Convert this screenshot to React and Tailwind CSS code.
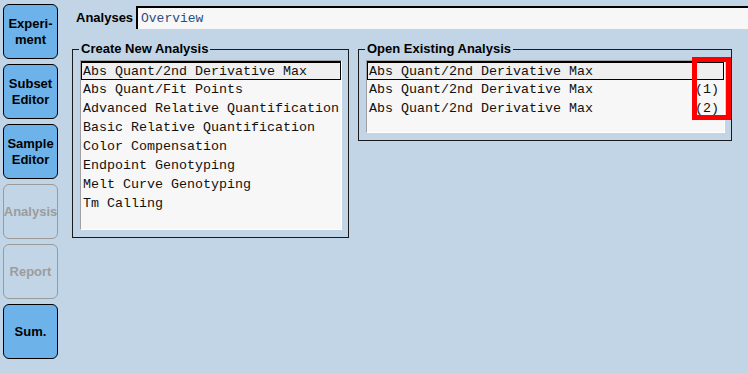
import React from "react";

const createItems = [
  "Abs Quant/2nd Derivative Max",
  "Abs Quant/Fit Points",
  "Advanced Relative Quantification",
  "Basic Relative Quantification",
  "Color Compensation",
  "Endpoint Genotyping",
  "Melt Curve Genotyping",
  "Tm Calling",
];

const openItems = [
  { name: "Abs Quant/2nd Derivative Max", tag: "" },
  { name: "Abs Quant/2nd Derivative Max", tag: "(1)" },
  { name: "Abs Quant/2nd Derivative Max", tag: "(2)" },
];

const navButtons = [
  { label: ["Experi-", "ment"], enabled: true },
  { label: ["Subset", "Editor"], enabled: true },
  { label: ["Sample", "Editor"], enabled: true },
  { label: ["Analysis"], enabled: false },
  { label: ["Report"], enabled: false },
  { label: ["Sum."], enabled: true },
];

function NavButton({ label, enabled }) {
  return (
    <button
      className={
        enabled
          ? "flex h-[55px] w-[55px] flex-col items-center justify-center rounded-[6px] border border-black bg-[#6db2e9] text-[13px] font-bold leading-[16px] text-black"
          : "flex h-[55px] w-[55px] flex-col items-center justify-center rounded-[6px] border border-[#9a9a9a] bg-[#c1d5e6] text-[13px] font-bold leading-[16px] text-[#9c9c9c]"
      }
    >
      {label.map((l) => (
        <span key={l}>{l}</span>
      ))}
    </button>
  );
}

function Row({ selected, children }) {
  return (
    <div
      className={
        selected
          ? "flex h-[19px] items-center justify-between whitespace-nowrap border border-t-2 border-black bg-[#efefef] pl-[1px] pr-[4px]"
          : "flex h-[19px] items-center justify-between whitespace-nowrap border border-transparent pl-[1px] pr-[4px]"
      }
    >
      {children}
    </div>
  );
}

function GroupBox({ title, className, children }) {
  return (
    <fieldset className={`relative min-w-0 border border-[#1a1a1a] pb-[7px] pl-[7px] pr-[6px] pt-[3px] ${className}`}>
      <legend className="ml-[-1px] px-[2px] text-[13px] font-bold leading-[16px] text-black">
        {title}
      </legend>
      {children}
    </fieldset>
  );
}

export default function App() {
  return (
    <div className="flex h-[373px] w-[748px] overflow-hidden bg-[#c1d5e6] font-['Liberation_Sans',Arial,sans-serif]">
      {/* Left navigation */}
      <nav className="flex w-[72px] shrink-0 flex-col gap-[5px] pl-[3px] pt-[4px]">
        {navButtons.map((b) => (
          <NavButton key={b.label.join("")} {...b} />
        ))}
      </nav>

      <main className="flex flex-1 flex-col pt-[6px]">
        {/* Analyses selector */}
        <div className="flex h-[23px] items-stretch">
          <div className="flex w-[64px] items-center pl-[4px] text-[13px] font-bold text-black">
            Analyses
          </div>
          <div className="flex flex-1 items-center border-l-2 border-t-2 border-black bg-[#f7f7f7] pl-[3px] font-['Liberation_Mono',monospace] text-[13px] text-[#2b4c7e]">
            Overview
          </div>
        </div>

        <div className="mt-[12px] flex items-start gap-[9px] text-[13.33px] leading-[17px] text-[#111]">
          <GroupBox title="Create New Analysis" className="w-[277px] shrink-0">
            <div className="h-[170px] w-[262px] overflow-hidden border-b border-l border-r border-t border-[#a0a0a0] border-b-white border-r-white bg-[#f7f7f7] font-['Liberation_Mono',monospace]">
              {createItems.map((item, i) => (
                <Row key={item} selected={i === 0}>
                  <span>{item}</span>
                </Row>
              ))}
            </div>
          </GroupBox>

          <GroupBox title="Open Existing Analysis" className="w-[374px] shrink-0">
            <div className="relative h-[73px] w-[359px] border-b border-l border-r border-t border-[#a0a0a0] border-b-white border-r-white bg-[#f7f7f7] font-['Liberation_Mono',monospace]">
              {openItems.map((item, i) => (
                <Row key={i} selected={i === 0}>
                  <span>{item.name}</span>
                  <span>{item.tag}</span>
                </Row>
              ))}
              {/* highlight marker */}
              <div className="absolute left-[325px] top-[-4px] h-[63px] w-[39px] border-[5px] border-[#ff0000]" />
            </div>
          </GroupBox>
        </div>
      </main>
    </div>
  );
}
